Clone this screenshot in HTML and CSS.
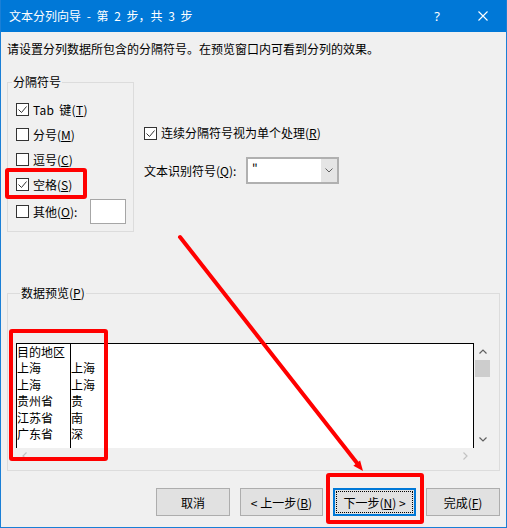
FILE: index.html
```html
<!DOCTYPE html>
<html lang="zh-CN">
<head>
<meta charset="utf-8">
<title>文本分列向导</title>
<link rel="stylesheet" href="styles.css">
</head>
<body>
<div class="window">
  <div class="titlebar">
    <span class="title">文本分列向导 - 第 2 步，共 3 步</span>
    <span class="tb-btn help">?</span>
    <span class="tb-btn close">
      <svg width="10" height="10" viewBox="0 0 10 10"><path d="M0.5 0.5L9.5 9.5M9.5 0.5L0.5 9.5" stroke="#fff" stroke-width="1.1" fill="none"/></svg>
    </span>
  </div>
  <div class="content">
    <p class="intro">请设置分列数据所包含的分隔符号。在预览窗口内可看到分列的效果。</p>
    <div class="top">
      <div class="group g1">
        <div class="legend">分隔符号</div>
        <div class="opts">
          <div class="row">
            <span class="chk-box"><svg width="11" height="11" viewBox="0 0 11 11"><polyline points="1.5,5.5 4.5,8.5 9.5,2.5" fill="none" stroke="#333" stroke-width="1"/></svg></span>
            <span class="wide">Tab 键(<u>T</u>)</span>
          </div>
          <div class="row">
            <span class="chk-box"></span>
            <span>分号(<u>M</u>)</span>
          </div>
          <div class="row">
            <span class="chk-box"></span>
            <span>逗号(<u>C</u>)</span>
          </div>
          <div class="row">
            <span class="chk-box"><svg width="11" height="11" viewBox="0 0 11 11"><polyline points="1.5,5.5 4.5,8.5 9.5,2.5" fill="none" stroke="#333" stroke-width="1"/></svg></span>
            <span>空格(<u>S</u>)</span>
          </div>
          <div class="row other">
            <span class="chk-box"></span>
            <span class="other-label">其他(<u>O</u>):</span>
            <span class="other-input"></span>
          </div>
        </div>
      </div>
      <div class="right">
        <div class="row single">
          <span class="chk-box"><svg width="11" height="11" viewBox="0 0 11 11"><polyline points="1.5,5.5 4.5,8.5 9.5,2.5" fill="none" stroke="#333" stroke-width="1"/></svg></span>
          <span>连续分隔符号视为单个处理(<u>R</u>)</span>
        </div>
        <div class="qual">
          <span class="qual-label">文本识别符号(<u>Q</u>):</span>
          <span class="combo">
            <span class="combo-text">"</span>
            <span class="combo-btn"><svg width="8" height="5" viewBox="0 0 8 5"><polyline points="0.5,0.5 4,4 7.5,0.5" fill="none" stroke="#606060" stroke-width="1"/></svg></span>
          </span>
        </div>
      </div>
    </div>
    <div class="group g2">
      <div class="legend">数据预览(<u>P</u>)</div>
      <div class="preview">
        <div class="data">
          <div class="col col1">
            <div class="cell">目的地区</div>
            <div class="cell">上海</div>
            <div class="cell">上海</div>
            <div class="cell">贵州省</div>
            <div class="cell">江苏省</div>
            <div class="cell">广东省</div>
          </div>
          <div class="col col2">
            <div class="cell"></div>
            <div class="cell">上海</div>
            <div class="cell">上海</div>
            <div class="cell">贵</div>
            <div class="cell">南</div>
            <div class="cell">深</div>
          </div>
        </div>
        <div class="vscroll">
          <span class="sb-btn"><svg width="8" height="5" viewBox="0 0 8 5"><polyline points="0.5,4.5 4,1 7.5,4.5" fill="none" stroke="#606060" stroke-width="1.2"/></svg></span>
          <span class="thumb"></span>
          <span class="sb-space"></span>
          <span class="sb-btn"><svg width="8" height="5" viewBox="0 0 8 5"><polyline points="0.5,0.5 4,4 7.5,0.5" fill="none" stroke="#606060" stroke-width="1.2"/></svg></span>
        </div>
        <div class="hscroll">
          <span class="sb-btn"><svg width="5" height="8" viewBox="0 0 5 8"><polyline points="4.5,0.5 1,4 4.5,7.5" fill="none" stroke="#c2c2c2" stroke-width="1.2"/></svg></span>
          <span class="sb-btn"><svg width="5" height="8" viewBox="0 0 5 8"><polyline points="0.5,0.5 4,4 0.5,7.5" fill="none" stroke="#c2c2c2" stroke-width="1.2"/></svg></span>
        </div>
        <div class="corner"></div>
      </div>
    </div>
    <div class="buttons">
      <button class="btn w74">取消</button>
      <button class="btn w83">&lt; 上一步(<u>B</u>)</button>
      <button class="btn w83 primary">下一步(<u>N</u>) &gt;</button>
      <button class="btn w74">完成(<u>F</u>)</button>
    </div>
  </div>

  <div class="mark m1"></div>
  <div class="mark m2"></div>
  <div class="mark m3"></div>
  <svg class="arrow" width="507" height="528" viewBox="0 0 507 528">
    <line x1="180" y1="237" x2="357" y2="463" stroke="#ff0000" stroke-width="4" stroke-linecap="round"/>
    <polygon points="363,471 353.4,465.8 360.1,460.5" fill="#ff0000"/>
  </svg>
</div>
</body>
</html>
```

FILE: styles.css
```css
* { box-sizing: border-box; }
html, body { margin: 0; padding: 0; }
body {
  width: 507px;
  height: 528px;
  overflow: hidden;
  background: #f0f0f0;
  font-family: "Noto Sans CJK SC", "Noto Sans", sans-serif;
  font-size: 12px;
  color: #000;
}
u { text-decoration: underline; text-underline-offset: 1px; }

.window {
  position: relative;
  width: 507px;
  height: 528px;
  border: 1px solid #1a7fd6;
  border-top: 0;
  background: #f0f0f0;
  display: flex;
  flex-direction: column;
}

.titlebar {
  height: 32px;
  background: #0078d7;
  color: #fff;
  display: flex;
  align-items: center;
  flex: none;
}
.title { flex: 1; padding-left: 8px; line-height: 16px; word-spacing: 3px; }
.tb-btn {
  width: 46px;
  height: 32px;
  display: flex;
  align-items: center;
  justify-content: center;
}
.help { font-family: "Noto Sans", sans-serif; font-size: 13px; }

.content { padding: 0 6px; flex: 1; }
.intro { margin: 9px 0 0 0; line-height: 16px; }

.top { display: flex; align-items: flex-start; margin-top: 25px; }

.group { border: 1px solid #dcdcdc; }
.legend {
  margin: -9px 0 0 4px;
  padding: 0 1px;
  background: #f0f0f0;
  line-height: 16px;
  width: max-content;
}

.g1 { width: 127px; padding-bottom: 7px; }
.opts { padding-top: 7px; }
.row {
  height: 25px;
  display: flex;
  align-items: center;
  padding-left: 8px;
  line-height: 16px;
  white-space: nowrap;
}
.wide { word-spacing: 2px; letter-spacing: 0.3px; }
.row.other { margin-top: 2px; }
.chk-box {
  width: 13px;
  height: 13px;
  border: 1px solid #333;
  background: #fff;
  margin-right: 4px;
  flex: none;
  display: block;
}
.chk-box svg { display: block; }
.other-label { width: 57px; }
.other-input {
  width: 36px;
  height: 25px;
  border: 1px solid #a6a6a6;
  background: #fff;
}

.right { margin-left: 10px; padding-top: 43px; }
.row.single { height: 16px; padding-left: 0; }
.qual { display: flex; align-items: center; margin-top: 16px; line-height: 16px; }
.qual-label { width: 102px; white-space: nowrap; }
.combo {
  width: 93px;
  height: 27px;
  border: 2px solid #b0b0b0;
  background: #fff;
  display: flex;
}
.combo-text { flex: 1; padding-left: 4px; line-height: 20px; }
.combo-btn {
  width: 16px;
  background: #e5e5e5;
  display: flex;
  align-items: center;
  justify-content: center;
}

.g2 { margin-top: 61px; padding: 0 0 7px 8px; }
.preview {
  margin-top: 42px;
  width: 475px;
  height: 120px;
  display: grid;
  grid-template-columns: 458px 17px;
  grid-template-rows: 105px 15px;
}
.data {
  background: #fff;
  border: 1px solid #000;
  border-bottom: 0;
  display: flex;
}
.col1 { width: 54px; border-right: 1px solid #000; }
.col2 { flex: 1; }
.cell { height: 16.4px; line-height: 16.4px; white-space: nowrap; }

.vscroll { display: flex; flex-direction: column; }
.sb-btn {
  flex: none;
  width: 17px;
  height: 17px;
  display: flex;
  align-items: center;
  justify-content: center;
}
.thumb { height: 17px; margin: 0 1px; background: #cdcdcd; flex: none; }
.sb-space { flex: 1; }
.hscroll { display: flex; justify-content: space-between; align-items: center; }
.hscroll .sb-btn { height: 15px; }

.buttons {
  display: flex;
  justify-content: flex-end;
  gap: 10px;
  margin-top: 17px;
}
.btn {
  height: 28px;
  border: 1px solid #adadad;
  background: #e1e1e1;
  font: inherit;
  color: #000;
  padding: 0;
  display: flex;
  align-items: center;
  justify-content: center;
}
.w74 { width: 74px; }
.w83 { width: 83px; }
.btn.primary {
  border: 2px solid #0078d7;
  outline: 1px dotted #000;
  outline-offset: -4px;
}

.mark {
  position: absolute;
  border: 4px solid #ff0000;
  border-radius: 3px;
}
.m1 { left: 4px; top: 168px; width: 82px; height: 31px; }
.m2 { left: 8px; top: 329px; width: 99px; height: 132px; }
.m3 { left: 325px; top: 473px; width: 98px; height: 51px; }
.arrow { position: absolute; left: -1px; top: 0; pointer-events: none; }
```
